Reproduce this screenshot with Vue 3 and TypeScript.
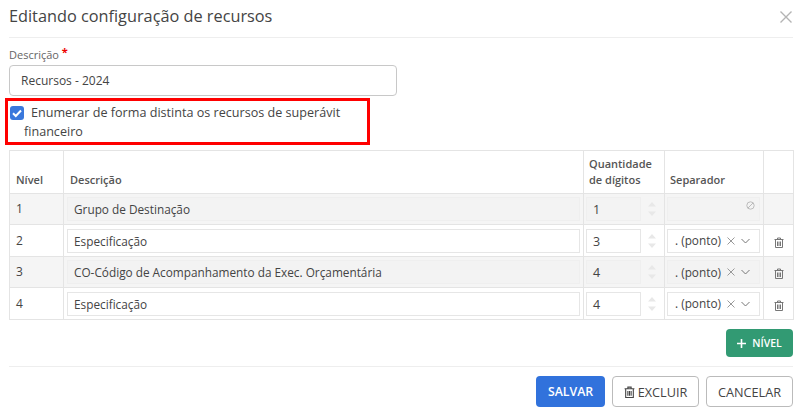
<script setup lang="ts">
interface Row { n: number; desc: string; digits: number; editable: boolean; sep: boolean; del: boolean }
const rows: Row[] = [
  { n: 1, desc: 'Grupo de Destinação', digits: 1, editable: false, sep: false, del: false },
  { n: 2, desc: 'Especificação', digits: 3, editable: true, sep: true, del: true },
  { n: 3, desc: 'CO-Código de Acompanhamento da Exec. Orçamentária', digits: 4, editable: false, sep: true, del: true },
  { n: 4, desc: 'Especificação', digits: 4, editable: true, sep: true, del: true },
]
</script>

<template>
  <div class="modal">
    <header class="head">
      <h1>Editando configuração de recursos</h1>
      <svg class="close" width="14" height="14" viewBox="0 0 14 14"><path d="M1.500 1.500l11 11M12.500 1.500l-11 11" stroke="#b4b4b4" stroke-width="1.400" fill="none"/></svg>
    </header>
    <label class="lbl">Descrição <span class="req">*</span></label>
    <div class="input">Recursos - 2024</div>
    <div class="check-wrap">
      <div class="check">
        <span class="box"><svg width="14" height="14" viewBox="0 0 14 14"><path d="M3 7.200l2.800 2.800L11 4.500" stroke="#fff" stroke-width="2" fill="none"/></svg></span>
        <span class="ctext">Enumerar de forma distinta os recursos de superávit financeiro</span>
      </div>
    </div>
    <table class="grid">
      <colgroup>
        <col style="width:54px" /><col style="width:520px" /><col style="width:81px" /><col style="width:99px" /><col style="width:30px" />
      </colgroup>
      <thead>
        <tr>
          <th>Nível</th><th>Descrição</th><th class="tight">Quantidade de dígitos</th><th class="tight">Separador</th><th></th>
        </tr>
      </thead>
      <tbody>
        <tr v-for="r in rows" :key="r.n" :class="{ shaded: r.n % 2 === 1 }">
          <td class="num">{{ r.n }}</td>
          <td class="pad"><div class="field" :class="{ off: !r.editable }">{{ r.desc }}</div></td>
          <td class="pad tightcell">
            <div class="digits">
              <div class="field small" :class="{ off: !r.editable }">{{ r.digits }}</div>
              <svg class="spin" width="10" height="18" viewBox="0 0 10 18"><path d="M5 2l4 4.500H1zM5 16l4-4.500H1z" fill="#e8e8e8"/></svg>
            </div>
          </td>
          <td class="pad tightcell">
            <div class="field sel" :class="{ off: !r.editable }">
              <template v-if="r.sep">
                <span class="septext">. (ponto)</span>
                <svg width="8" height="8" viewBox="0 0 8 8"><path d="M.5.500l7 7M7.500.500l-7 7" stroke="#999" stroke-width="1" fill="none"/></svg>
                <svg width="9" height="6" viewBox="0 0 9 6"><path d="M.5 1l4 4 4-4" stroke="#777" stroke-width="1" fill="none"/></svg>
              </template>
              <svg v-else class="ban" width="9" height="9" viewBox="0 0 9 9"><circle cx="4.500" cy="4.500" r="3.700" stroke="#bbb" fill="none"/><path d="M2 7l5-5" stroke="#bbb"/></svg>
            </div>
          </td>
          <td class="act">
            <svg v-if="r.del" class="trash" width="10" height="11" viewBox="0 0 10 11"><path d="M.5 2.500h9M3.500 2.500V1h3v1.500M1.500 2.500V10.500h7V2.500M3.500 4.500v4.500M5 4.500v4.500M6.500 4.500v4.500" stroke="#777" fill="none"/></svg>
          </td>
        </tr>
      </tbody>
    </table>
    <div class="add-row">
      <button class="btn green">
        <svg width="9" height="9" viewBox="0 0 9 9"><path d="M4.500 0v9M0 4.500h9" stroke="#fff" stroke-width="1.600"/></svg>
        NÍVEL
      </button>
    </div>
    <footer class="foot">
      <button class="btn blue">SALVAR</button>
      <button class="btn outline excl">
        <svg width="11" height="12" viewBox="0 0 10 11"><path d="M.5 2.500h9M3.500 2.500V1h3v1.500M1.500 2.500V10.500h7V2.500M3.500 4.500v4.500M5 4.500v4.500M6.500 4.500v4.500" stroke="#444" fill="none"/></svg>
        EXCLUIR
      </button>
      <button class="btn outline">CANCELAR</button>
    </footer>
  </div>
</template>

<style scoped>
.modal { width: 801px; height: 414px; box-sizing: border-box; padding: 0 8px 0 9px; background: #fff; font-family: "Open Sans", sans-serif; color: #444; overflow: hidden; font-size: 12px; }
.head { display: flex; justify-content: space-between; align-items: flex-start; height: 38px; box-sizing: border-box; border-bottom: 1px solid #eee; margin-bottom: 9px; }
.head h1 { margin: 0; font-size: 16.300px; font-weight: 400; color: #444; line-height: 32px; }
.close { margin-top: 10px; }
.lbl { display: block; font-size: 11px; color: #666; line-height: 16px; }
.req { color: #e00; position: relative; top: -3px; font-weight: 700; }
.input { box-sizing: border-box; width: 388px; height: 31px; margin-top: 2px; border: 1px solid #c8c8c8; border-radius: 4px; padding: 0 11px; line-height: 30px; color: #444; }
.check-wrap { position: relative; height: 54px; }
.check-wrap::after { content: ""; position: absolute; left: -4px; top: 2px; width: 365px; height: 47px; box-sizing: border-box; border: 3px solid #f00; pointer-events: none; }
.check { width: 335px; padding: 7px 0 0 15px; line-height: 19px; position: relative; text-indent: 7px; color: #444; font-size: 12.600px; }
.box { position: absolute; left: 1px; top: 10px; width: 14px; height: 14px; border-radius: 3px; background: #3a78dc; display: block; text-indent: 0; }
.box svg { display: block; }
.grid { width: 784px; table-layout: fixed; border-collapse: collapse; font-size: 11.800px; }
.grid th, .grid td { border: 1px solid #e4e4e4; }
.grid th { box-sizing: border-box; height: 43px; padding: 0 6px 5px; text-align: left; vertical-align: bottom; font-size: 11px; font-weight: 600; color: #555; line-height: 16px; }
.grid th.tight { padding-left: 5px; }
.grid td { height: 32px; box-sizing: border-box; padding: 0; color: #444; }
.grid tbody tr:nth-child(1) td { height: 31px; }
.grid tbody tr:nth-child(3) td { height: 31px; }
.grid .shaded td { background: #f5f5f5; }
.grid td.num { padding: 0 0 1px 6px; font-size: 12px; }
.grid td.pad { padding: 3px; }
.grid td.tightcell { padding-left: 2px; }
.field { box-sizing: border-box; height: 24px; line-height: 23px; padding: 0 6px; border: 1px solid #e6e6e6; background: #fff; color: #444; }
.field.off { background: #f3f3f3; border-color: #efefef; }
.digits { display: flex; align-items: center; }
.small { width: 55px; flex: none; font-size: 12.500px; }
.spin { margin-left: 6px; }
.sel { display: flex; align-items: center; gap: 6px; padding-left: 7px; position: relative; white-space: nowrap; }
.septext { flex: none; }
.ban { position: absolute; right: 4px; top: 3px; }
.act { text-align: center; }
.trash { display: inline-block; vertical-align: middle; }
.add-row { display: flex; justify-content: flex-end; padding: 9px 0 9px; border-bottom: 1px solid #eee; }
.btn { box-sizing: border-box; font-family: inherit; border-radius: 4px; cursor: pointer; display: inline-flex; align-items: center; justify-content: center; }
.green { background: #329a73; color: #fff; border: none; width: 67px; height: 28px; font-size: 10.500px; gap: 6px; font-weight: 600; }
.foot { display: flex; justify-content: flex-end; gap: 7px; padding-top: 9px; }
.blue { background: #3172dc; color: #fff; border: none; width: 69px; height: 31px; font-size: 12.300px; font-weight: 600; }
.outline { background: #fff; border: 1px solid #bbb; color: #444; height: 31px; width: 87px; font-size: 12.700px; }
.excl { gap: 3px; }
</style>
